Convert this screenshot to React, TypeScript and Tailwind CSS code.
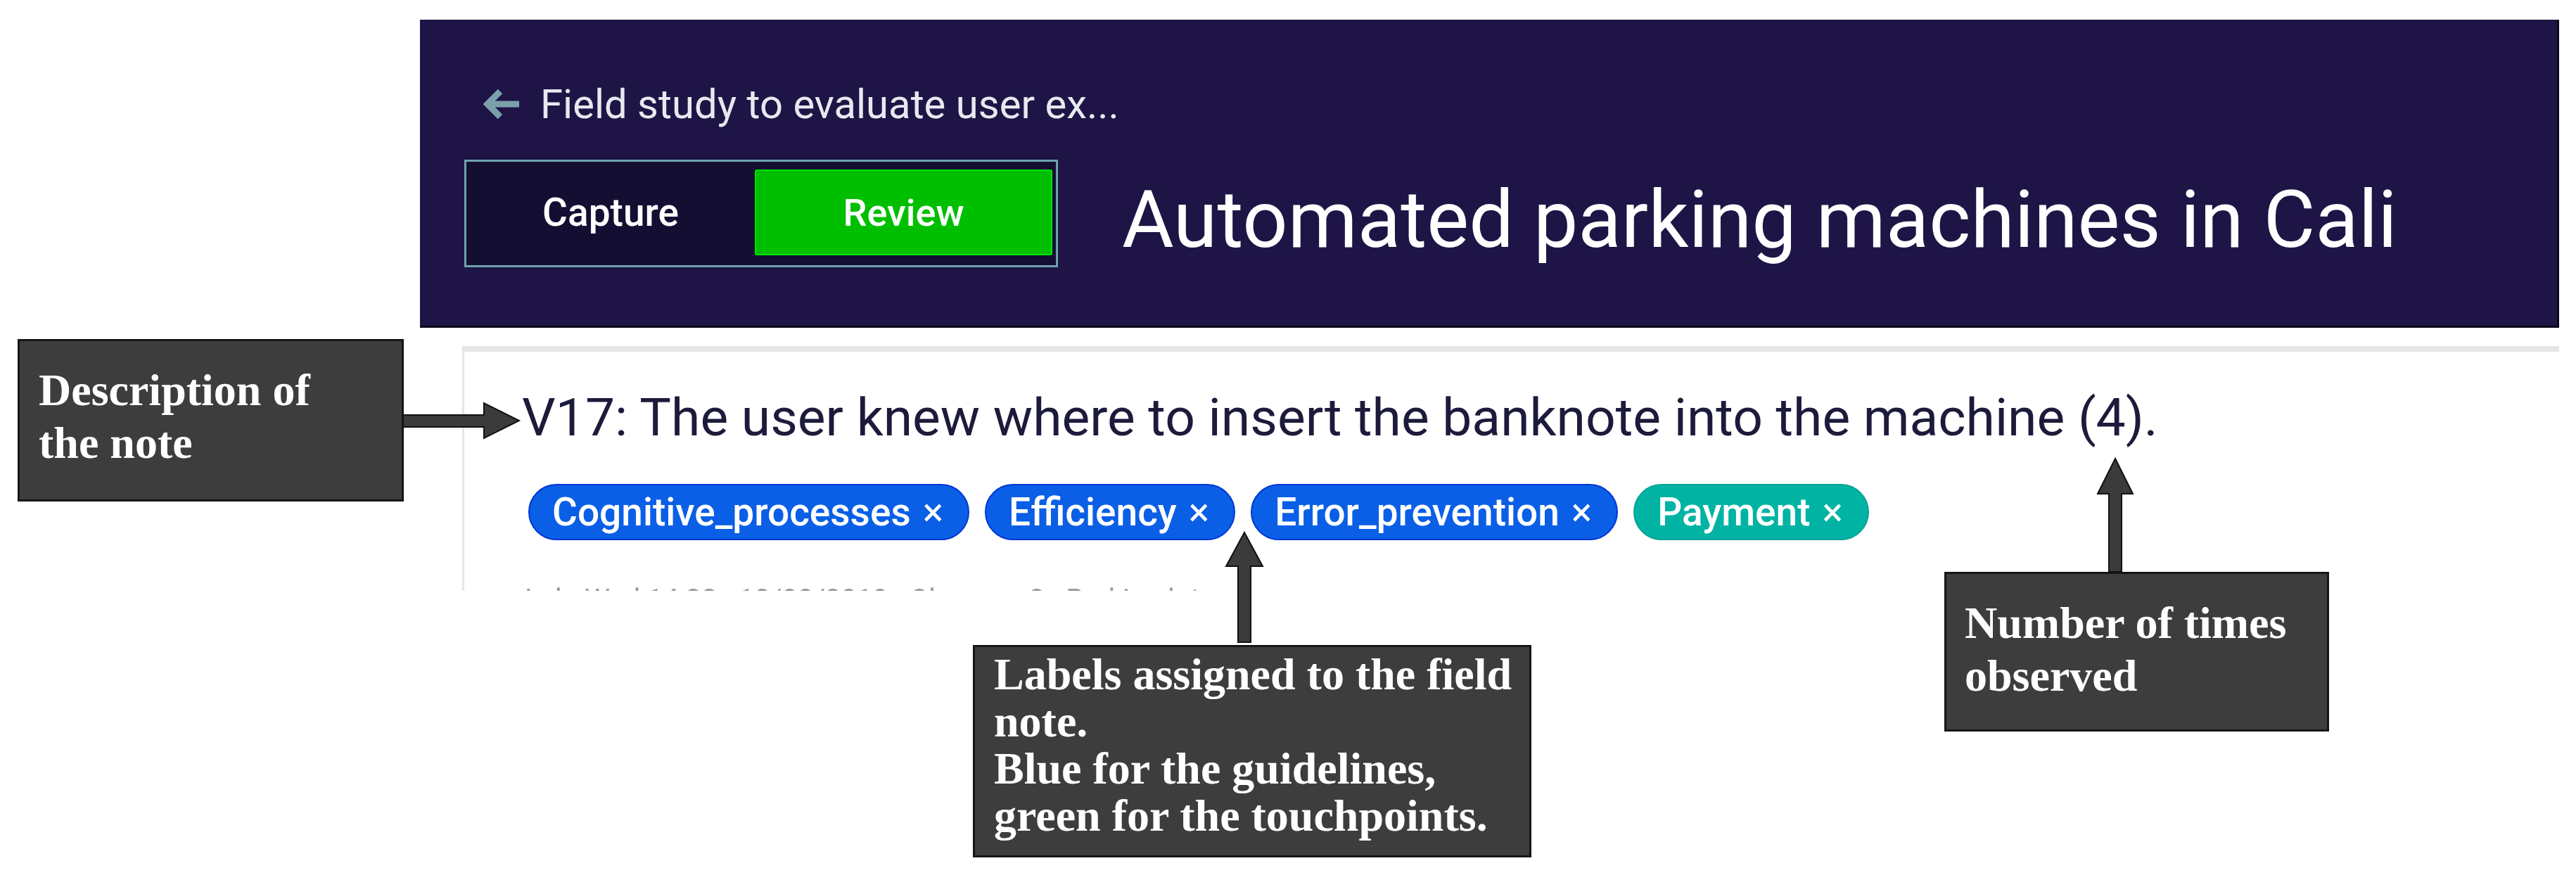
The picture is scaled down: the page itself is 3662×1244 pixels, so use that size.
import React from 'react';

const ui = { fontFamily: 'Roboto, "Liberation Sans", sans-serif' };
const serif = { fontFamily: '"Liberation Serif", "DejaVu Serif", serif' };

type Tag = { label: string; kind: 'guideline' | 'touchpoint' };

const tags: Tag[] = [
  { label: 'Cognitive_processes', kind: 'guideline' },
  { label: 'Efficiency', kind: 'guideline' },
  { label: 'Error_prevention', kind: 'guideline' },
  { label: 'Payment', kind: 'touchpoint' },
];

function Chip({ tag }: { tag: Tag }) {
  const color =
    tag.kind === 'guideline'
      ? 'bg-[#0a5fe6] border-[#0036d4]'
      : 'bg-[#00b3a3] border-[#00a595]';
  return (
    <span
      className={`flex h-[80px] items-center gap-[17px] rounded-full border-2 pl-[32px] pr-[35px] text-[55px] font-medium text-white ${color}`}
    >
      <span>{tag.label}</span>
      <span className="font-normal">×</span>
    </span>
  );
}

function Header() {
  return (
    <header className="h-[438px] border-b-[3px] border-r-[3px] border-[#0b0919] bg-[#1e1546] pl-[63px] pt-[82px]">
      <div className="flex items-center gap-[28px] pl-[26px] text-[58px] leading-[76px] text-[#e6eaf0]">
        <svg width="54" height="46" viewBox="0 0 54 46" className="shrink-0">
          <path d="M52 23H8M25 5L7 23l18 18" fill="none" stroke="#7aa0ac" strokeWidth="9" />
        </svg>
        <span>Field study to evaluate user ex...</span>
      </div>
      <div className="mt-[41px] flex items-center">
        <div className="flex h-[153px] w-[844px] border-[3px] border-[#6ea2ad] bg-[#140e32] pb-[14px] pr-[5px] pt-[11px]">
          <div className="flex flex-1 items-center justify-center text-[55px] font-medium text-white">Capture</div>
          <div className="flex w-[423px] items-center justify-center rounded-[3px] border-2 border-[#00e400] bg-[#00bf00] text-[54px] font-medium text-white">
            Review
          </div>
        </div>
        <h1 className="ml-[91px] pt-[18px] text-[113px] leading-none font-normal text-white">
          Automated parking machines in Cali
        </h1>
      </div>
    </header>
  );
}

function NotePanel() {
  return (
    <section className="ml-[60px] mt-[26px] h-[348px] overflow-hidden border-l-[3px] border-t-[8px] border-[#e4e6e8] bg-white pl-[82px] pt-[45px]">
      <p className="text-[75px] leading-[96px] text-[#1d1b3b]">
        V17: The user knew where to insert the banknote into the machine (4).
      </p>
      <div className="ml-[9px] mt-[47px] flex gap-[22px]">
        {tags.map((t) => (
          <Chip key={t.label} tag={t} />
        ))}
      </div>
      <p className="ml-[4px] mt-[61px] text-[40px] leading-[48px] text-[#9a9a9a]">
        Lab: Wed 14:32 · 12/08/2019 · Observer 2 · Parking lot
      </p>
    </section>
  );
}

function Callout({ className, lines, leading }: { className: string; lines: string[]; leading: string }) {
  return (
    <div
      className={`absolute border-[3px] border-[#161616] bg-[#3d3d3d] text-[64px] font-bold text-white ${leading} ${className}`}
      style={serif}
    >
      {lines.map((l) => (
        <div key={l}>{l}</div>
      ))}
    </div>
  );
}

export default function App() {
  return (
    <div className="relative h-[1244px] w-[3662px] overflow-hidden bg-white" style={ui}>
      <div className="pl-[597px] pr-[24px] pt-[28px]">
        <Header />
        <NotePanel />
      </div>

      {/* annotations over the screenshot */}
      <Callout
        className="left-[25px] top-[482px] h-[231px] w-[549px] pl-[27px] pt-[32px]"
        leading="leading-[75px]"
        lines={['Description of', 'the note']}
      />
      <Callout
        className="left-[1383px] top-[917px] h-[302px] w-[794px] pl-[27px] pt-[5px]"
        leading="leading-[67px]"
        lines={['Labels assigned to the field', 'note.', 'Blue for the guidelines,', 'green for the touchpoints.']}
      />
      <Callout
        className="left-[2764px] top-[813px] h-[227px] w-[547px] pl-[26px] pt-[32px]"
        leading="leading-[75px]"
        lines={['Number of times', 'observed']}
      />

      <svg className="absolute left-[573px] top-[570px]" width="168" height="56" viewBox="0 0 168 56">
        <path d="M0 20H115V3L165 28L115 53V37H0Z" fill="#3b3b3b" stroke="#111" strokeWidth="2" />
      </svg>
      <svg className="absolute left-[1741px] top-[755px]" width="56" height="160" viewBox="0 0 56 160">
        <path d="M28 2L54 50H37V158H19V50H2Z" fill="#3b3b3b" stroke="#111" strokeWidth="2" />
      </svg>
      <svg className="absolute left-[2980px] top-[650px]" width="54" height="164" viewBox="0 0 54 164">
        <path d="M27 2L52 52H36V163H18V52H2Z" fill="#3b3b3b" stroke="#111" strokeWidth="2" />
      </svg>
    </div>
  );
}
